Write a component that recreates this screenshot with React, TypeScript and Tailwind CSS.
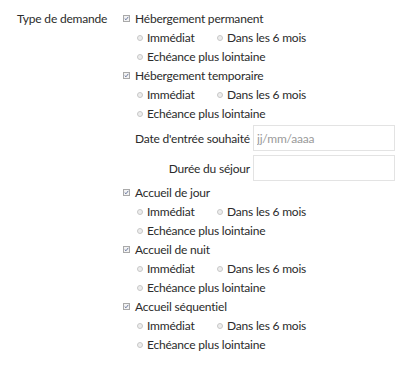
import React from "react";

type Group = { id: string; label: string; dates?: boolean };

const GROUPS: Group[] = [
  { id: "perm", label: "Hébergement permanent" },
  { id: "temp", label: "Hébergement temporaire", dates: true },
  { id: "jour", label: "Accueil de jour" },
  { id: "nuit", label: "Accueil de nuit" },
  { id: "seq", label: "Accueil séquentiel" },
];

function Check() {
  return (
    <span className="grid place-items-center h-[7px] w-[7px] border border-[#a9a9a9] bg-[#f3f3f3]" aria-hidden>
      <svg viewBox="0 0 7 7" className="h-[5px] w-[5px]">
        <path d="M1 3.6 L2.8 5.3 L6 1.2" fill="none" stroke="#4a5a8a" strokeWidth="1.1" />
      </svg>
    </span>
  );
}

function Radio() {
  return <span className="inline-block h-[6px] w-[6px] rounded-full border border-[#c8c8c8] bg-[#ededed]" aria-hidden />;
}

function Option({ label, className = "" }: { label: string; className?: string }) {
  return (
    <span className={`flex items-center gap-[4px] whitespace-nowrap ${className}`}>
      <Radio />
      <span>{label}</span>
    </span>
  );
}

function Field({ label, placeholder }: { label: string; placeholder?: string }) {
  return (
    <div className="flex items-center">
      <span className="w-[130px] pr-[3px] text-right whitespace-nowrap">{label}</span>
      <input
        placeholder={placeholder}
        className="h-[26px] w-[142px] border border-[#e3e3e3] bg-white px-[3px] text-[12px] text-[#333] outline-none placeholder:text-[#9a9a9a]"
      />
    </div>
  );
}

export default function App() {
  return (
    <div className="h-[375px] w-[412px] bg-white text-[12px] leading-[19px] tracking-[-0.2px] text-[#2b2b2b] font-['Lato',sans-serif]">
      <div className="flex pt-[9px]">
        <div className="w-[123px] shrink-0 pl-[17px] whitespace-nowrap">Type de demande</div>
        <div className="flex flex-col">
          {GROUPS.map((g) => (
            <div key={g.id} className="flex flex-col">
              <label className="flex items-center gap-[5px] whitespace-nowrap">
                <Check />
                <span>{g.label}</span>
              </label>
              <div className="flex pl-[14px]">
                <Option label="Immédiat" className="w-[80px]" />
                <Option label="Dans les 6 mois" />
              </div>
              <div className="flex pl-[14px]">
                <Option label="Echéance plus lointaine" />
              </div>
              {g.dates && (
                <div className="flex flex-col gap-[4px] pt-[2px] pb-[2px]">
                  <Field label="Date d'entrée souhaité" placeholder="jj/mm/aaaa" />
                  <Field label="Durée du séjour" />
                </div>
              )}
            </div>
          ))}
        </div>
      </div>
    </div>
  );
}
